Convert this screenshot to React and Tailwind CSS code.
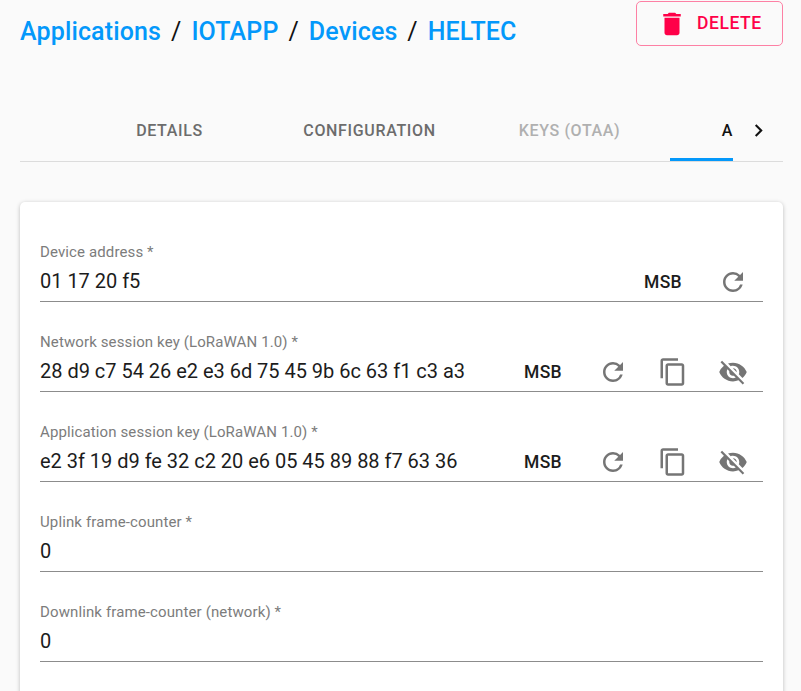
import React from "react";
import { MdDelete, MdChevronRight, MdRefresh, MdContentCopy, MdVisibilityOff } from "react-icons/md";

const crumbs = ["Applications", "IOTAPP", "Devices", "HELTEC"];

function Field({ label, value, actions }) {
  return (
    <div className="h-[60px] mb-[30px] border-b border-[#8c8c8c] flex flex-col">
      <label className="block h-5 leading-5 text-[15px] tracking-[0.12px] text-[#7c7c7c] whitespace-nowrap">{label}</label>
      <div className="h-[39px] flex items-center">
        <span className="flex-1 pb-0.5 text-[20px] leading-6 tracking-[-0.02px] text-[#1c1c1c] whitespace-nowrap">{value}</span>
        {actions && (
          <div className="flex items-center text-[#757575]">
            <span className="w-[80px] text-center text-[17.5px] leading-6 font-medium tracking-[0.4px] text-[#1c1c1c]">MSB</span>
            <span className="w-[60px] flex justify-center"><MdRefresh size={30} /></span>
            {actions === "full" && (
              <>
                <span className="w-[60px] flex justify-center"><MdContentCopy size={30} /></span>
                <span className="w-[60px] flex justify-center"><MdVisibilityOff size={30} /></span>
              </>
            )}
          </div>
        )}
      </div>
    </div>
  );
}

export default function App() {
  return (
    <div className="w-[801px] h-[691px] overflow-hidden bg-[#fafafa] font-[Roboto,sans-serif] px-5 flex flex-col">
      <header className="h-[101px] shrink-0 flex items-start justify-between">
        <nav className="flex pt-4 text-[25px] leading-8 font-medium tracking-[0.14px] whitespace-nowrap">
          {crumbs.map((c, i) => (
            <React.Fragment key={c}>
              {i > 0 && <span className="w-[30.3px] text-center font-normal text-[#111]">/</span>}
              <a className="text-[#0398fa]">{c}</a>
            </React.Fragment>
          ))}
        </nav>
        <button className="mt-px -mr-0.5 w-[147px] h-[45px] rounded-[5px] border border-[#fd80a4] text-[#ff0048] flex items-center pl-5">
          <MdDelete size={30} />
          <span className="ml-[10px] text-[17.5px] font-medium tracking-[0.55px]">DELETE</span>
        </button>
      </header>
      <div className="h-[61px] shrink-0 w-[763px] border-b border-[#dcdcdc] flex text-[16px] font-medium tracking-[0.65px] text-[#6c6c6c]">
        <span className="w-[299px] pb-px flex items-center justify-center">DETAILS</span>
        <span className="w-[101px] pb-px flex items-center justify-center whitespace-nowrap">CONFIGURATION</span>
        <span className="w-[250px] pl-[49px] pb-px flex items-center justify-center text-[#b0b0b0]">KEYS (OTAA)</span>
        <span className="w-[63px] pt-0.5 border-b-[3px] border-[#0398fa] text-[#111] flex items-center justify-end">A</span>
        <span className="w-[50px] pb-px flex items-center justify-center text-[#111]"><MdChevronRight size={25} /></span>
      </div>
      <main className="mt-10 w-[763px] h-[600px] shrink-0 rounded-[5px] bg-white px-5 pt-10 shadow-[0_1px_4px_rgba(0,0,0,0.25)]">
        <Field label="Device address *" value="01 17 20 f5" actions="refresh" />
        <Field label="Network session key (LoRaWAN 1.0) *" value="28 d9 c7 54 26 e2 e3 6d 75 45 9b 6c 63 f1 c3 a3" actions="full" />
        <Field label="Application session key (LoRaWAN 1.0) *" value="e2 3f 19 d9 fe 32 c2 20 e6 05 45 89 88 f7 63 36" actions="full" />
        <Field label="Uplink frame-counter *" value="0" />
        <Field label="Downlink frame-counter (network) *" value="0" />
      </main>
    </div>
  );
}
